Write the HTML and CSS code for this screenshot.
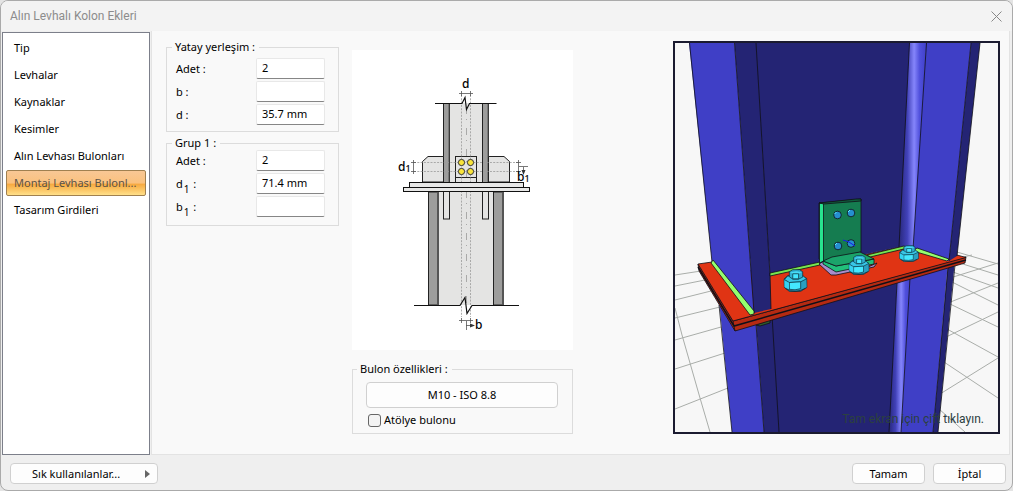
FILE: index.html
```
<!DOCTYPE html>
<html lang="tr">
<head>
  <meta charset="UTF-8">
  <title>Alın Levhalı Kolon Ekleri</title>
  <link rel="stylesheet" href="styles.css">
</head>
<body>
  <div class="dialog">
    <header class="titlebar">
      <h1>Alın Levhalı Kolon Ekleri</h1>
      <button type="button" class="close" aria-label="Kapat">
        <svg width="11" height="11" viewBox="0 0 11 11"><path d="M.5 .5l10 10M10.5 .5l-10 10" stroke="#888" fill="none"/></svg>
      </button>
    </header>

    <main class="main">
      <nav class="sidebar">
        <a href="#tip">Tip</a>
        <a href="#levhalar">Levhalar</a>
        <a href="#kaynaklar">Kaynaklar</a>
        <a href="#kesimler">Kesimler</a>
        <a href="#alin">Alın Levhası Bulonları</a>
        <a href="#montaj" class="active">Montaj Levhası Bulonl...</a>
        <a href="#tasarim">Tasarım Girdileri</a>
      </nav>

      <section class="content">
        <div class="fields">
          <fieldset class="group roomy">
            <legend>Yatay yerleşim :</legend>
            <div class="row"><label for="h-count">Adet :</label><input type="text" id="h-count" value="2"></div>
            <div class="row"><label for="h-b">b :</label><input type="text" id="h-b"></div>
            <div class="row"><label for="h-d">d :</label><input type="text" id="h-d" value="35.7 mm"></div>
          </fieldset>
          <fieldset class="group">
            <legend>Grup 1 :</legend>
            <div class="row"><label for="g-count">Adet :</label><input type="text" id="g-count" value="2"></div>
            <div class="row"><label for="g-d">d<sub>1</sub> :</label><input type="text" id="g-d" value="71.4 mm"></div>
            <div class="row"><label for="g-b">b<sub>1</sub> :</label><input type="text" id="g-b"></div>
          </fieldset>
        </div>

        <div class="middle">
          <svg class="diagram" width="221" height="300" viewBox="352 50 221 300">
            <!-- lower column -->
            <g stroke="#222" stroke-width="1">
              <rect x="438.5" y="192" width="55" height="113" fill="#e4e4e3" stroke="none"/>
              <rect x="428.5" y="192" width="10" height="113" fill="#9d9d9c"/>
              <rect x="493.5" y="192" width="10" height="113" fill="#9d9d9c"/>
              <path d="M438 192v113M503 192v113" stroke="#555" stroke-width="2"/>
              <rect x="443.5" y="190" width="6" height="29" fill="#e4e4e3"/>
              <rect x="482.5" y="190" width="6" height="29" fill="#e4e4e3"/>
            </g>
            <!-- upper column -->
            <rect x="450" y="103" width="33" height="80" fill="#e4e4e3"/>
            <g stroke="#222">
              <rect x="443.5" y="103.5" width="6" height="79" fill="#9d9d9c"/>
              <rect x="482.5" y="103.5" width="6" height="79" fill="#9d9d9c"/>
              <path d="M449 104v78M488 104v78" stroke="#555"/>
              <path d="M422.5 182v-20.500l5.500-5h15.500V182zM509.5 182v-20.500l-5.500-5h-15.500V182z" fill="#e4e4e3"/>
              <rect x="455.5" y="156.5" width="21" height="26" fill="#e4e4e3"/>
              <path d="M455.5 177.5h21"/>
            </g>
            <!-- guide lines -->
            <g stroke="#999" fill="none" stroke-width=".8">
              <path d="M461.5 95v222M470.5 95v222M414 162.5h105M414 171.5h105" stroke-dasharray="2 1.3"/>
              <path d="M466.5 107v200" stroke-dasharray="7 5 1 8"/>
            </g>
            <!-- end plates -->
            <rect x="409.5" y="182.5" width="114" height="5" fill="#e8e8e7" stroke="#111"/>
            <rect x="403.5" y="187.5" width="126" height="4" fill="#e8e8e7" stroke="#111"/>
            <g fill="#f9e43b" stroke="#333">
              <circle cx="461.5" cy="162.5" r="3.1"/><circle cx="470.5" cy="162.5" r="3.1"/>
              <circle cx="461.5" cy="171.5" r="3.1"/><circle cx="470.5" cy="171.5" r="3.1"/>
            </g>
            <!-- break lines -->
            <g fill="none" stroke="#111" stroke-width="1.2">
              <path d="M435 103.5h27l3-6 1.500 12 3-6h27M414 305.5h46l5-8 2 16 5-8h47"/>
            </g>
            <!-- dimensions -->
            <g fill="none" stroke="#555" stroke-width=".8">
              <path d="M459 93.5h14M461.5 91v5M470.5 91v5M459 320.5h14M461.5 318v5M470.5 318v5M466.5 321v9M466 325.5h5"/>
              <path d="M413.5 160v14M411 162.5h5M411 171.5h5M518.5 160v14M516 162.5h5M516 171.5h5M519 166.5h9M523.5 167v4"/>
            </g>
            <path d="M470 323.5l5 2-5 2zM521.5 170l2 5 2-5z" fill="#333"/>
            <g class="dim-text">
              <text x="462" y="88">d</text>
              <text x="475" y="329">b</text>
              <text x="398" y="171">d<tspan class="dim-sub" dy="1">1</tspan></text>
              <text x="517" y="181">b<tspan class="dim-sub" dy="1">1</tspan></text>
            </g>
          </svg>

          <fieldset class="group bolts">
            <legend>Bulon özellikleri :</legend>
            <button type="button" class="btn wide">M10 - ISO 8.8</button>
            <label class="check"><input type="checkbox">Atölye bulonu</label>
          </fieldset>
        </div>

        <figure class="preview">
          <svg viewBox="675 43 323 389">
            <defs>
              <linearGradient id="fillet">
                <stop offset="0" stop-color="#28287c"/><stop offset=".3" stop-color="#4141b8"/>
                <stop offset=".55" stop-color="#8585fb"/><stop offset=".75" stop-color="#5050dc"/>
                <stop offset="1" stop-color="#3f3fc8"/>
              </linearGradient>
              <symbol id="nut" viewBox="0 0 70 68" preserveAspectRatio="none">
                <path d="M1 30L12 20 46 18 68 28 69 54 50 66 18 67 2 54z" fill="#2a9fc0" stroke="#0a2530" stroke-width="2"/>
                <path d="M3 31l14 9 33-2 17-9-10-9-45 1z" fill="#38c6e6" stroke="#0a2530" stroke-width="2"/>
                <path d="M17 40l33-2v20q-16 6-33 2z" fill="#44e8ff" stroke="#0a2530" stroke-width="2"/>
                <path d="M3 34l13 7v19L3 53z" fill="#36d2f0"/>
                <path d="M17 8l10-6h20l9 6v16l-12 6H27l-10-7z" fill="#2faed0" stroke="#0a2530" stroke-width="2"/>
                <path d="M19 10l18-3 17 3-10 4H27z" fill="#48dcf6"/>
                <path d="M27 14h17v15H27z" fill="#44e8ff" stroke="#0a2530" stroke-width="2"/>
                <path d="M6 58q28 16 58-1" fill="none" stroke="#0a2530" stroke-width="2"/>
              </symbol>
            </defs>

            <rect x="675" y="43" width="323" height="389" fill="#f7f7f7"/>
            <g stroke="#a9ada9" fill="none">
              <path d="M675 275l26-4M675 286l30-6M675 300l36-9M675 318l45-11M675 340l46-13M675 369l50-16M675 409l53-21M675 308l7 27 18 63 10 34"/>
              <path d="M950 250l48 14M950 260l48 15M950 271l48 17M950 281l48 24M950 304l48 23M947 329l51 28M944 362l54 36M939 409l26 23"/>
              <path d="M950 278l48-15M948 303l50-20M946 337l52-25M940 394l58-36M950 260l22-5"/>
            </g>

            <!-- lower column -->
            <path d="M771 290L915 260 901 432H765z" fill="#242474"/>
            <path d="M719 300L756 322 764 432H732z" fill="#3f3fc6"/>
            <path d="M756 322L772 312 779 432H764z" fill="#242474"/>
            <path d="M910 270L948 262 933 432H900z" fill="#3f3fc6"/>
            <path d="M897 280L911 272 901 432H889z" fill="url(#fillet)"/>
            <path d="M948 264L955 260 938 432H933z" fill="#242474"/>
            <path d="M719 305L732 432M756 324l8 108M772 315l7 117M897 283l-8 149M910 278l-9 154M948 267l-15 165M955 265l-17 167" class="edge"/>
            <path d="M756 325l14-5v3l-10 3z" fill="#2f5a2c" class="edge"/>

            <!-- end plates -->
            <path d="M698 264L699 271 735 331 965 263 966 257 733 321z" fill="#b52a12" class="edge"/>
            <path d="M698 264L712 262 771 275 903 246 957 255 966 257.5 733 321z" fill="#e03414" class="edge"/>
            <path d="M698 267L734 326 966 260" class="edge bold"/>
            <path d="M733 321l2 10" class="edge"/>

            <!-- upper column -->
            <path d="M755 43H912L903 246 770 275z" fill="#242474"/>
            <path d="M689 43H734.5L754 313 712 262z" fill="#3f3fc6"/>
            <path d="M734.5 43H756L770 273 771 309 754 313z" fill="#242474"/>
            <path d="M926 43H971L949 261 912 248z" fill="#3f3fc6"/>
            <path d="M909.5 43H926.5L913 249 903 247 899 248z" fill="url(#fillet)"/>
            <path d="M971 43H980L957 256 949 261z" fill="#242474"/>
            <path d="M689.5 43L712 262M734.5 43L754 313M756 43l14 232 1 34M909.5 43L899 247M926.5 43L913 249M971 43l-22 218M980 43l-23 213" class="edge"/>

            <!-- welds -->
            <path d="M713 260l41 51v3l-4 1-39-52z" fill="#94ff6e" class="edge"/>
            <path d="M770 273l50-11v3l-50 11zM867 255l37-9 4 2-38 9z" fill="#78e650" class="edge"/>
            <path d="M917 248l32 11-2 2-34-10z" fill="#94ff6e" class="edge"/>

            <!-- angle bracket -->
            <path d="M819 264l5-3 44 6 9-4-3 4-38 8h-5z" fill="#a98ccb" class="edge"/>
            <path d="M819 203l42-4v53l-37 9-5-2z" fill="#157c50" class="edge"/>
            <path d="M819.5 203h4v58l-4 2z" fill="#28e38f" class="edge"/>
            <path d="M819 203l37-4h5v2l-37 3z" fill="#105c3d" class="edge"/>
            <path d="M823 261l13 5 38-7v5l-38 8-13-8z" fill="#22c07b" class="edge"/>
            <path d="M823 261l9-4 28-5 14 7-38 7z" fill="#1ba46a" class="edge"/>
            <g fill="#268fd0" class="edge">
              <circle cx="837.5" cy="215" r="3.8"/><circle cx="851" cy="213" r="3.8"/>
              <circle cx="838" cy="246" r="3.8"/><circle cx="851" cy="243.5" r="3.8"/>
            </g>
            <path d="M834.5 214l2-2M848 212l2-2M835 245l2-2" stroke="#5ff0ff"/>
            <path d="M843 240l6 2 6 4" stroke="#1919e8" fill="none"/>

            <use href="#nut" x="783.5" y="269" width="24" height="23"/>
            <use href="#nut" x="848.5" y="255" width="21" height="20"/>
            <use href="#nut" x="899" y="245" width="20" height="17"/>
          </svg>
          <figcaption>Tam ekran için çift tıklayın.</figcaption>
        </figure>
      </section>
    </main>

    <footer class="footer">
      <button type="button" class="btn favorites"><span>Sık kullanılanlar...</span>
        <svg width="5" height="8" viewBox="0 0 5 8"><path d="M0 0l5 4-5 4z" fill="#666"/></svg>
      </button>
      <button type="button" class="btn">Tamam</button>
      <button type="button" class="btn">İptal</button>
    </footer>
  </div>
</body>
</html>
```
FILE: styles.css
```
* {
  box-sizing: border-box;
}
body {
  margin: 0;
  background: #e4e4e4;
  font-family: "Noto Sans", "Open Sans", sans-serif;
  font-size: 11px;
  line-height: 14px;
  color: #000;
}
button, input {
  font: inherit;
  color: inherit;
}
.dialog {
  display: flex;
  flex-direction: column;
  min-height: 100vh;
  border: 1px solid #aaa;
  border-radius: 8px;
  background: #efefef;
  overflow: hidden;
}

/* Title bar */
.titlebar {
  display: flex;
  align-items: center;
  justify-content: space-between;
  height: 30px;
  padding: 0 10px 0 9px;
  background: #f3f3f3;
}
.titlebar h1 {
  margin: 0;
  font-family: Roboto, "Noto Sans", sans-serif;
  font-size: 12px;
  font-weight: normal;
  color: #8c8c8c;
}
.close {
  display: flex;
  padding: 0;
  border: 0;
  background: none;
}

/* Page list */
.main {
  flex: 1;
  display: flex;
  padding: 0 2px 0 1px;
}
.sidebar {
  display: flex;
  flex-direction: column;
  gap: 1px;
  width: 148px;
  margin-top: 1px;
  padding: 2px 3px;
  border: 1px solid #7c7f8a;
  background: #fff;
}
.sidebar a {
  height: 26px;
  padding: 5px 7px;
  border: 1px solid transparent;
  border-radius: 2px;
  color: #000;
  text-decoration: none;
  white-space: nowrap;
}
.sidebar .active {
  border-color: #a08050;
  background: linear-gradient(#f8c795, #fac17e 50%, #f7a93f 55%, #ffe08a);
  color: #5b5247;
}

/* Settings */
.content {
  flex: 1;
  display: flex;
  align-items: flex-start;
  gap: 13px;
  margin-left: 1px;
  padding: 9px 9px 20px 14px;
  border: solid #e3e3e3;
  border-width: 0 1px 1px;
  background: #f9f9f9;
}
.fields {
  display: flex;
  flex-direction: column;
  gap: 4px;
  width: 173px;
}
.group {
  min-width: 0;
  margin: 0;
  padding: 0 13px 8px 9px;
  border: 1px solid #dcdcdc;
}
.group legend {
  margin-left: -4px;
  padding: 0 4px 0 3px;
}
.roomy {
  padding-top: 4px;
  padding-bottom: 6px;
}
.row {
  display: flex;
  justify-content: space-between;
  height: 21px;
}
.row + .row {
  margin-top: 2px;
}
.row label {
  padding-top: 4px;
}
.row sub {
  position: relative;
  top: 2px;
  margin: 0 1px;
  font-size: 10px;
  line-height: 0;
}
.row input {
  width: 69px;
  padding: 0 4px 2px 5px;
  border: 1px solid #e8e8e8;
  border-bottom-color: #868686;
  border-radius: 2px;
  background: #fff;
}

/* Connection sketch and bolt options */
.middle {
  display: flex;
  flex-direction: column;
  gap: 12px;
  width: 221px;
  padding-top: 10px;
}
.diagram {
  background: #fff;
}
.dim-text {
  font-size: 12px;
  font-weight: 500;
}
.dim-sub {
  font-size: 9px;
}
.bolts {
  padding: 6px 14px 6px 13px;
}
.bolts legend {
  margin-left: -9px;
}
.btn {
  width: 73px;
  height: 21px;
  padding: 0;
  border: 1px solid #d0d0d0;
  border-radius: 4px;
  background: #fdfdfd;
}
.wide {
  width: 100%;
  height: 26px;
}
.check {
  display: flex;
  align-items: center;
  gap: 3px;
  margin: 5px 0 0 2px;
}
.check input {
  appearance: none;
  width: 13px;
  height: 13px;
  margin: 0;
  border: 1px solid #666;
  border-radius: 3px;
  background: #f3f3f3;
}
.check input:checked {
  background: #666;
}

/* 3D view */
.preview {
  position: relative;
  width: 327px;
  margin: 1px 0 0 auto;
  border: 2px solid #1b1b30;
}
.preview svg {
  display: block;
  width: 100%;
}
.preview figcaption {
  position: absolute;
  right: 14px;
  bottom: 6px;
  font-family: Roboto, "Noto Sans", sans-serif;
  font-size: 12px;
  color: #2c4040;
}
.edge {
  stroke: #101018;
  stroke-width: .8;
}
path.edge:not([fill]) {
  fill: none;
}
.edge.bold {
  stroke-width: 1.5;
}

/* Bottom buttons */
.footer {
  display: flex;
  gap: 8px;
  padding: 8px 6px 6px 9px;
}
.favorites {
  display: flex;
  align-items: center;
  justify-content: space-between;
  width: 148px;
  margin-right: auto;
  padding: 0 7px 0 21px;
}
```
